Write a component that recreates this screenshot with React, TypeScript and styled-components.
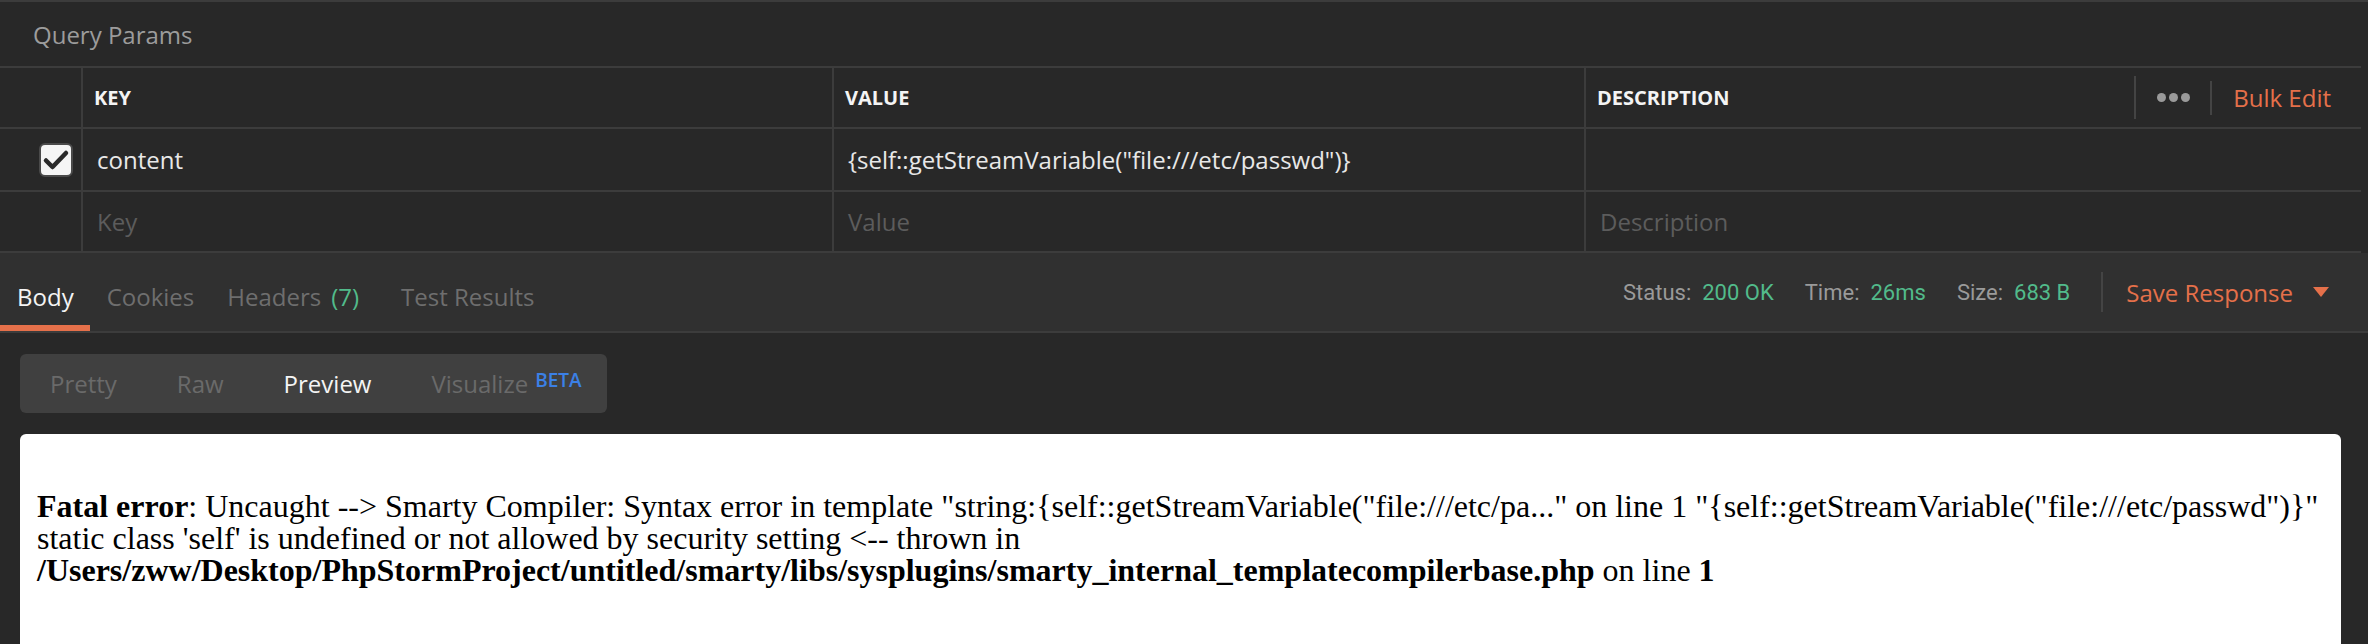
import React from 'react';
import styled, { createGlobalStyle } from 'styled-components';

const GlobalStyle = createGlobalStyle`
    html, body {
        margin: 0;
        padding: 0;
        background: #282828;
    }
    #root {
        width: 2368px;
        height: 644px;
        overflow: hidden;
    }
`;

const uiFont = `"Open Sans", "Liberation Sans", sans-serif`;
const orange = '#e5704a';
const green = '#52bb8b';
const line = '#3c3c3c';

const Page = styled.div`
    width: 2368px;
    background: #282828;
    font-family: ${uiFont};
`;

const SectionTitle = styled.div`
    height: 64px;
    border-top: 2px solid ${line};
    display: flex;
    align-items: center;
    padding-left: 33px;
    font-size: 24px;
    color: #9c9c9c;
`;

const ParamsTable = styled.div`
    margin-right: 7px;
    border-top: 2px solid ${line};
`;

const Row = styled.div<{ tall?: boolean }>`
    display: grid;
    grid-template-columns: 81px 751px 752px 1fr;
    height: ${p => (p.tall ? 61 : 59)}px;
    border-bottom: 2px solid ${line};
`;

const CheckCell = styled.div`
    display: flex;
    align-items: center;
    padding-left: 39px;
`;

const Cell = styled.div<{ placeholder?: boolean }>`
    display: flex;
    align-items: center;
    padding-left: 14px;
    border-left: 2px solid ${line};
    font-size: 24px;
    color: ${p => (p.placeholder ? '#5c5c5c' : '#e8e8e8')};
    white-space: nowrap;
`;

const HeadCell = styled(Cell)`
    padding-left: 11px;
    font-size: 20px;
    font-weight: 700;
    color: #f4f4f4;
`;

const HeadLabel = styled.span`
    flex: 1;
`;

const HeadActions = styled.div`
    display: flex;
    align-items: center;
    height: 100%;
    padding-right: 30px;
`;

const VDivider = styled.div<{ h: number }>`
    width: 2px;
    height: ${p => p.h}px;
    background: #444;
`;

const Dots = styled.div`
    display: flex;
    gap: 3px;
    margin: 0 20px 0 21px;
`;

const Dot = styled.span`
    width: 9px;
    height: 9px;
    border-radius: 50%;
    background: #9a9a9a;
`;

const BulkEdit = styled.span`
    margin-left: 21px;
    font-size: 24px;
    font-weight: 400;
    color: ${orange};
`;

const ResponseBar = styled.div`
    height: 78px;
    display: flex;
    align-items: stretch;
    justify-content: space-between;
    background: #303030;
    border-bottom: 2px solid ${line};
    padding-right: 39px;
`;

const Tabs = styled.div`
    display: flex;
`;

const Tab = styled.div<{ active?: boolean; extra?: number }>`
    display: flex;
    align-items: center;
    padding: 14px ${p => 16 + (p.extra || 0)}px 0 17px;
    border-bottom: 6px solid ${p => (p.active ? orange : 'transparent')};
    font-size: 24px;
    color: ${p => (p.active ? '#f4f4f4' : '#6e6e6e')};
`;

const Count = styled.span`
    margin-left: 10px;
    color: ${green};
`;

const Meta = styled.div`
    display: flex;
    align-items: center;
    font-family: Roboto, "Liberation Sans", sans-serif;
    font-size: 22px;
`;

const MetaLabel = styled.span`
    color: #9a9a9a;
    margin-right: 11px;
`;

const MetaValue = styled.span`
    color: ${green};
    margin-right: 31px;
`;

const SaveResponse = styled.div`
    display: flex;
    align-items: center;
    margin-left: 23px;
    font-family: ${uiFont};
    font-size: 24px;
    color: ${orange};
`;

const Caret = styled.span`
    margin-left: 20px;
    width: 0;
    height: 0;
    border-left: 8px solid transparent;
    border-right: 8px solid transparent;
    border-top: 10px solid ${orange};
`;

const ResponseBody = styled.div`
    padding: 21px 27px 0 20px;
`;

const ViewModes = styled.div`
    display: inline-flex;
    align-items: center;
    height: 59px;
    background: #404040;
    border-radius: 6px;
`;

const Mode = styled.div<{ active?: boolean }>`
    display: flex;
    align-items: center;
    padding: 0 30px;
    font-size: 24px;
    color: ${p => (p.active ? '#f4f4f4' : '#6a6a6a')};

    &:last-child {
        padding-right: 25px;
    }
`;

const Beta = styled.sup`
    margin-left: 7px;
    font-size: 19px;
    font-weight: 600;
    color: #3b80e6;
    position: relative;
    top: -4px;
`;

const PreviewFrame = styled.div`
    margin-top: 21px;
    height: 260px;
    background: #fff;
    border-radius: 6px;
    padding: 24px 17px 0;
    font-family: "Liberation Serif", "Times New Roman", serif;
    font-size: 32px;
    line-height: 32px;
    color: #000;
    white-space: nowrap;
`;

const CheckBox = () => (
    <svg width="34" height="34" viewBox="0 0 34 34">
        <rect x="1" y="1" width="32" height="32" rx="5" fill="#f5f5f5" stroke="#4a4a4a" strokeWidth="2" />
        <path d="M7 17.5 L13.5 24 L27 10" fill="none" stroke="#2a2a2a" strokeWidth="4.5" strokeLinecap="round" strokeLinejoin="round" />
    </svg>
);

const App = () => {
    return (
        <Page>
            <GlobalStyle />
            <SectionTitle>Query Params</SectionTitle>
            <ParamsTable>
                <Row>
                    <CheckCell />
                    <HeadCell>KEY</HeadCell>
                    <HeadCell>VALUE</HeadCell>
                    <HeadCell>
                        <HeadLabel>DESCRIPTION</HeadLabel>
                        <HeadActions>
                            <VDivider h={43} />
                            <Dots>
                                <Dot />
                                <Dot />
                                <Dot />
                            </Dots>
                            <VDivider h={34} />
                            <BulkEdit>Bulk Edit</BulkEdit>
                        </HeadActions>
                    </HeadCell>
                </Row>
                <Row tall>
                    <CheckCell>
                        <CheckBox />
                    </CheckCell>
                    <Cell>content</Cell>
                    <Cell>{'{self::getStreamVariable("file:///etc/passwd")}'}</Cell>
                    <Cell />
                </Row>
                <Row>
                    <CheckCell />
                    <Cell placeholder>Key</Cell>
                    <Cell placeholder>Value</Cell>
                    <Cell placeholder>Description</Cell>
                </Row>
            </ParamsTable>
            <ResponseBar>
                <Tabs>
                    <Tab active>Body</Tab>
                    <Tab>Cookies</Tab>
                    <Tab extra={9}>
                        Headers<Count>(7)</Count>
                    </Tab>
                    <Tab>Test Results</Tab>
                </Tabs>
                <Meta>
                    <MetaLabel>Status:</MetaLabel>
                    <MetaValue>200 OK</MetaValue>
                    <MetaLabel>Time:</MetaLabel>
                    <MetaValue>26ms</MetaValue>
                    <MetaLabel>Size:</MetaLabel>
                    <MetaValue>683 B</MetaValue>
                    <VDivider h={40} />
                    <SaveResponse>
                        Save Response
                        <Caret />
                    </SaveResponse>
                </Meta>
            </ResponseBar>
            <ResponseBody>
                <ViewModes>
                    <Mode>Pretty</Mode>
                    <Mode>Raw</Mode>
                    <Mode active>Preview</Mode>
                    <Mode>
                        Visualize<Beta>BETA</Beta>
                    </Mode>
                </ViewModes>
                <PreviewFrame>
                    <br />
                    <b>Fatal error</b>: Uncaught --&gt; Smarty Compiler: Syntax error in template &quot;string:{'{'}self::getStreamVariable(&quot;file:///etc/pa...&quot; on line 1 &quot;{'{'}self::getStreamVariable(&quot;file:///etc/passwd&quot;){'}'}&quot;
                    <br />
                    static class 'self' is undefined or not allowed by security setting &lt;-- thrown in
                    <br />
                    <b>/Users/zww/Desktop/PhpStormProject/untitled/smarty/libs/sysplugins/smarty_internal_templatecompilerbase.php</b> on line <b>1</b>
                </PreviewFrame>
            </ResponseBody>
        </Page>
    );
};

export default App;
